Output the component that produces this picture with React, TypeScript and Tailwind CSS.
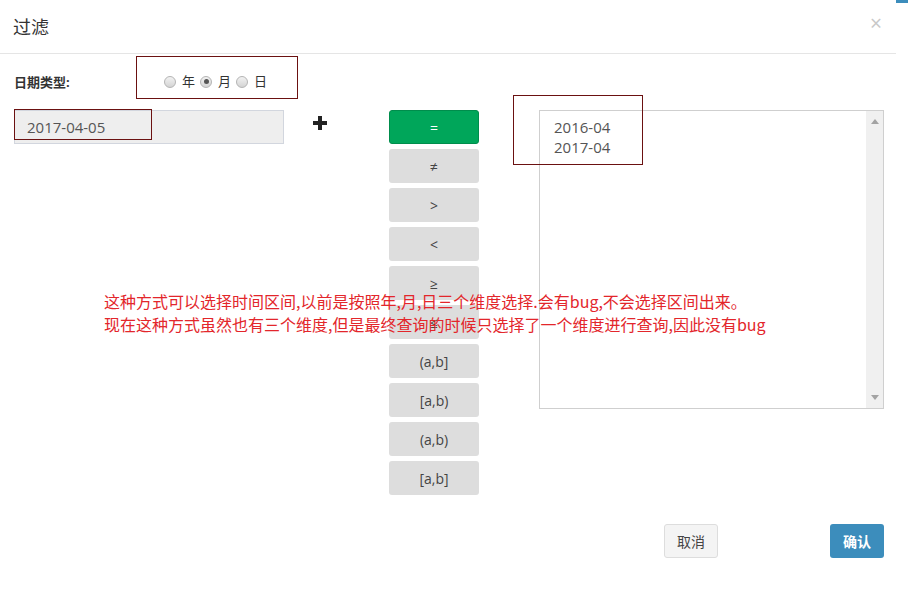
import React from "react";

const ops = ["=", "≠", ">", "<", "≥", "≤", "(a,b]", "[a,b)", "(a,b)", "[a,b]"];

function Radio({ checked }: { checked?: boolean }) {
  return (
    <span className="relative inline-flex h-[12px] w-[12px] items-center justify-center rounded-full border border-[#b4b4b4] bg-gradient-to-b from-[#f2f2f2] to-[#d4d4d4]">
      {checked && <span className="h-[5px] w-[5px] rounded-full bg-[#555]" />}
    </span>
  );
}

export default function App() {
  return (
    <div
      className="relative h-[607px] w-[908px] overflow-hidden bg-white text-[14px] text-[#333]"
      style={{ fontFamily: '"Open Sans", "Noto Sans CJK SC", sans-serif' }}
    >
      {/* sliver of the page behind */}
      <div className="absolute right-0 top-0 h-[3px] w-[12px] bg-[#3c8dbc]" />

      <div className="w-[896px]">
        {/* header */}
        <div className="flex h-[54px] items-center justify-between border-b border-[#e5e5e5] pl-[13px] pr-[14px]">
          <span className="text-[18px] leading-none text-[#333]">过滤</span>
          <span className="-mt-[6px] text-[21px] leading-none text-[#c8c8c8]">×</span>
        </div>

        {/* date type */}
        <div className="mt-[2px] flex items-start pl-[14px]">
          <div className="mt-[17px] w-[122px] text-[13px] font-bold leading-[18px] text-[#333]">日期类型:</div>
          <div className="flex h-[43px] w-[162px] items-center border border-[#6b1111] pl-[27px] pt-[8px] text-[13px] text-[#333]">
            <Radio />
            <span className="ml-[6px] mr-[5px]">年</span>
            <Radio checked />
            <span className="ml-[6px] mr-[5px]">月</span>
            <Radio />
            <span className="ml-[6px]">日</span>
          </div>
        </div>

        {/* main row */}
        <div className="mt-[11px] flex items-start">
          <div className="relative ml-[14px] h-[34px] w-[270px] border border-[#d2d6de] bg-[#eee] pl-[12px] text-[15px] leading-[32px] text-[#555]">
            2017-04-05
            <div className="absolute -left-[1px] -top-[2px] h-[31px] w-[138px] border border-[#6b1111]" />
          </div>

          <svg className="ml-[29px] mt-[6px]" width="14" height="14" viewBox="0 0 14 14">
            <rect x="5" y="0" width="4" height="14" fill="#222" />
            <rect x="0" y="5" width="14" height="4" fill="#222" />
          </svg>

          <div className="ml-[62px] flex w-[90px] flex-col gap-[5px]">
            {ops.map((op, i) => (
              <div
                key={op}
                className={
                  i === 0
                    ? "flex h-[34px] items-center justify-center rounded-[3px] border border-[#008d4c] bg-[#00a65a] text-white"
                    : "flex h-[34px] items-center justify-center rounded-[3px] bg-[#dddddd] text-[#444]"
                }
              >
                {op}
              </div>
            ))}
          </div>

          <div className="relative ml-[60px] flex h-[299px] w-[345px] border border-[#cfcfcf]">
            <div className="flex-1 pl-[14px] pt-[6px] text-[15px] leading-[20px] text-[#555]">
              <div>2016-04</div>
              <div>2017-04</div>
            </div>
            <div className="flex w-[17px] flex-col items-center justify-between bg-[#f0f0f0] py-[8px]">
              <svg width="8" height="5" viewBox="0 0 8 5">
                <path d="M4 0 L8 5 L0 5 Z" fill="#a3a3a3" />
              </svg>
              <svg width="8" height="5" viewBox="0 0 8 5">
                <path d="M0 0 L8 0 L4 5 Z" fill="#a3a3a3" />
              </svg>
            </div>
            <div className="absolute -left-[27px] -top-[16px] h-[70px] w-[130px] border border-[#6b1111]" />
          </div>
        </div>

        {/* footer */}
        <div className="mt-[29px] flex items-center pr-[12px]">
          <div className="ml-[664px] flex h-[34px] w-[54px] items-center justify-center rounded-[3px] border border-[#ddd] bg-[#f4f4f4] text-[#444]">
            取消
          </div>
          <div className="ml-auto flex h-[34px] w-[54px] items-center justify-center rounded-[3px] bg-[#3c8dbc] font-bold text-white">
            确认
          </div>
        </div>
      </div>

      {/* annotation */}
      <div
        className="absolute left-[104px] top-[290px] text-[16px] leading-[23px] text-[#e3262b]"
        style={{ fontFamily: '"Noto Sans CJK SC", sans-serif' }}
      >
        <div>这种方式可以选择时间区间,以前是按照年,月,日三个维度选择.会有bug,不会选择区间出来。</div>
        <div>现在这种方式虽然也有三个维度,但是最终查询的时候只选择了一个维度进行查询,因此没有bug</div>
      </div>
    </div>
  );
}
